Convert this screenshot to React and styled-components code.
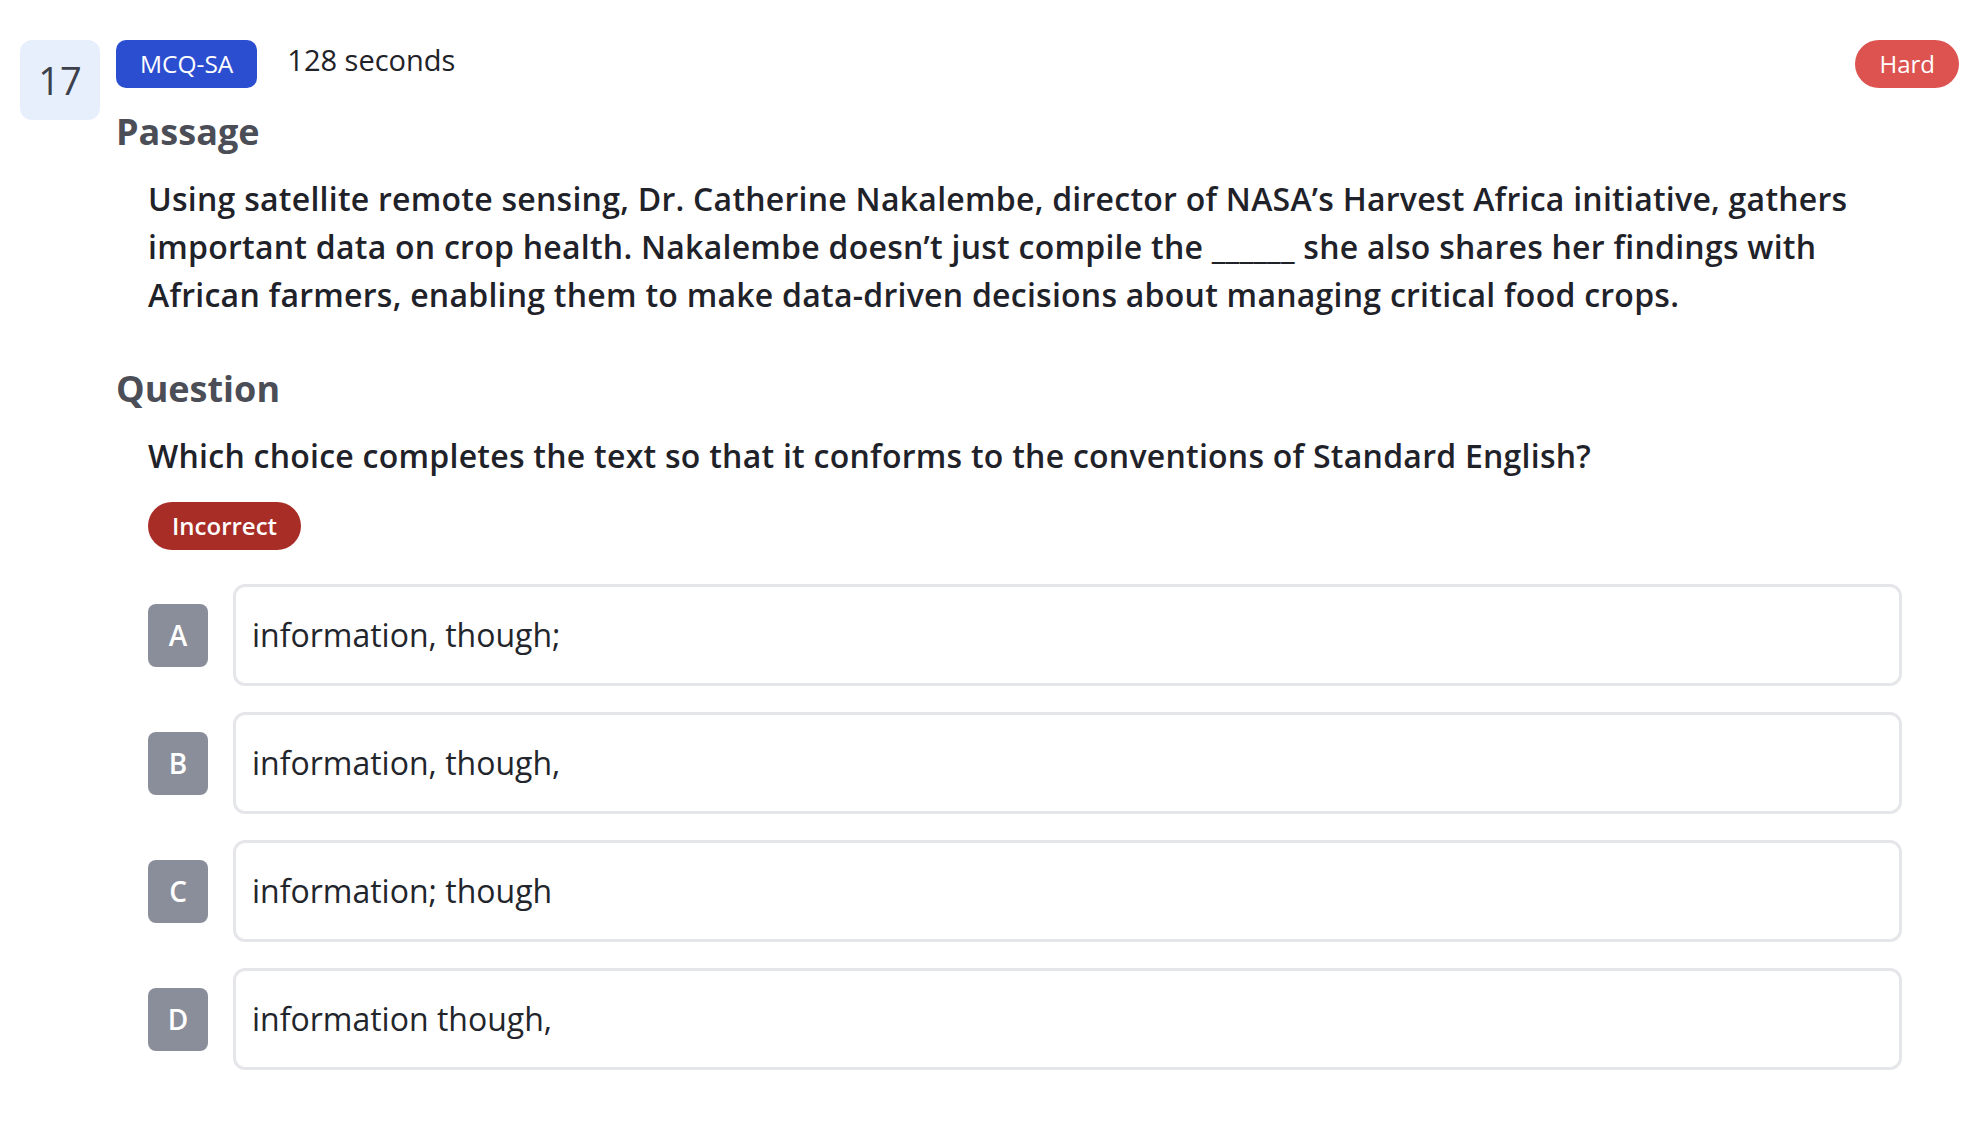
import React from "react";
import styled, { createGlobalStyle } from "styled-components";

const GlobalStyle = createGlobalStyle`
  body {
    margin: 0;
    background: #ffffff;
    font-family: "Open Sans", "Noto Sans", sans-serif;
  }
`;

const question = {
  number: 17,
  type: "MCQ-SA",
  time: "128 seconds",
  difficulty: "Hard",
  passage:
    "Using satellite remote sensing, Dr. Catherine Nakalembe, director of NASA’s Harvest Africa initiative, gathers important data on crop health. Nakalembe doesn’t just compile the ______ she also shares her findings with African farmers, enabling them to make data-driven decisions about managing critical food crops.",
  prompt:
    "Which choice completes the text so that it conforms to the conventions of Standard English?",
  result: "Incorrect",
  choices: [
    { letter: "A", text: "information, though;" },
    { letter: "B", text: "information, though," },
    { letter: "C", text: "information; though" },
    { letter: "D", text: "information though," },
  ],
};

// #region Styles
const Page = styled.div`
  display: flex;
  align-items: flex-start;
  gap: 16px;
  padding: 40px 25px 40px 20px;
`;

const NumberBox = styled.div`
  flex: none;
  width: 80px;
  height: 80px;
  border-radius: 12px;
  background: #e8effc;
  color: #3c404b;
  font-size: 38px;
  font-weight: 500;
  display: flex;
  align-items: center;
  justify-content: center;
`;

const Main = styled.div`
  flex: 1;
  min-width: 0;
`;

const Header = styled.div`
  display: flex;
  align-items: flex-start;
  gap: 30px;
`;

const Pill = styled.span`
  display: inline-flex;
  align-items: center;
  height: 48px;
  padding: 0 24px 2px;
  border-radius: ${(p) => (p.$round ? "24px" : "10px")};
  background: ${(p) => p.$bg};
  color: #ffffff;
  font-size: ${(p) => p.$size || 24}px;
  font-weight: ${(p) => p.$weight || 500};
  box-sizing: border-box;
`;

const HardPill = styled(Pill)`
  margin-left: auto;
`;

const Seconds = styled.span`
  font-size: 29px;
  line-height: 1.4;
  font-weight: 500;
  color: #1f2228;
`;

const SectionTitle = styled.h2`
  margin: ${(p) => (p.$first ? "22px" : "48px")} 0 22px;
  font-size: 36px;
  line-height: 1.2;
  font-weight: 700;
  color: #4b4d57;
`;

const Body = styled.div`
  padding: 0 57px 0 32px;
`;

const Text = styled.p`
  margin: 0;
  font-size: 32px;
  line-height: 1.5;
  font-weight: 600;
  letter-spacing: 0.25px;
  color: #1f2229;
`;

const ResultRow = styled.div`
  margin-top: 22px;
`;

const Choices = styled.div`
  margin-top: 34px;
  display: flex;
  flex-direction: column;
  gap: 26px;
`;

const ChoiceRow = styled.div`
  display: flex;
  align-items: center;
  gap: 25px;
`;

const Letter = styled.div`
  flex: none;
  width: 60px;
  height: 63px;
  border-radius: 8px;
  background: #8a8e9a;
  color: #ffffff;
  font-size: 28px;
  font-weight: 600;
  display: flex;
  align-items: center;
  justify-content: center;
`;

const ChoiceCard = styled.div`
  flex: 1;
  border: 3px solid #e5e6ea;
  border-radius: 12px;
  padding: 24px 16px;
  font-size: 32px;
  line-height: 1.5;
  font-weight: 400;
  color: #22252b;
`;
// #endregion

export default function App() {
  return (
    <>
      <GlobalStyle />
      <Page>
        <NumberBox>{question.number}</NumberBox>
        <Main>
          <Header>
            <Pill $bg="#2b4dd0" $size={24.5}>
              {question.type}
            </Pill>
            <Seconds>{question.time}</Seconds>
            <HardPill $bg="#dc5350" $round>
              {question.difficulty}
            </HardPill>
          </Header>

          <SectionTitle $first>Passage</SectionTitle>
          <Body>
            <Text>{question.passage}</Text>
          </Body>

          <SectionTitle>Question</SectionTitle>
          <Body>
            <Text>{question.prompt}</Text>
            <ResultRow>
              <Pill $bg="#a92d27" $round $weight={600}>
                {question.result}
              </Pill>
            </ResultRow>
            <Choices>
              {question.choices.map((choice) => (
                <ChoiceRow key={choice.letter}>
                  <Letter>{choice.letter}</Letter>
                  <ChoiceCard>{choice.text}</ChoiceCard>
                </ChoiceRow>
              ))}
            </Choices>
          </Body>
        </Main>
      </Page>
    </>
  );
}
